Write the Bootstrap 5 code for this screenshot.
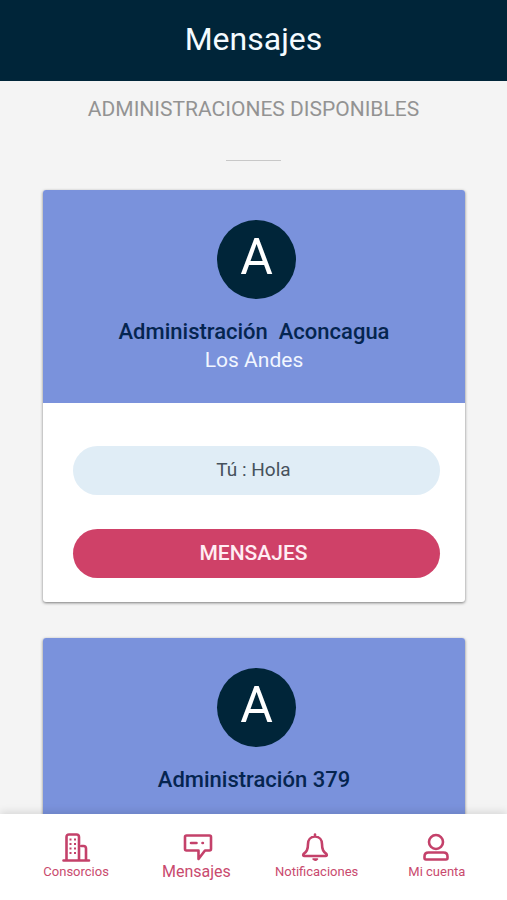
<!DOCTYPE html>
<html lang="es">
<head>
<meta charset="utf-8">
<meta name="viewport" content="width=device-width, initial-scale=1">
<title>Mensajes</title>
<link href="https://cdn.jsdelivr.net/npm/bootstrap@5.3.0/dist/css/bootstrap.min.css" rel="stylesheet">
<style>
  body { font-family: Roboto, "Liberation Sans", sans-serif; background: #f4f4f4; }
  .top-bar { background: #002539; color: #f4fbff; height: 81px; padding-bottom: 4px; }
  .top-bar h1 { font-size: 32px; line-height: 40px; }
  .scroll-area { min-height: 0; scrollbar-width: none; }
  .scroll-area::-webkit-scrollbar { display: none; }
  .section-title { font-size: 21px; line-height: 24px; color: #939393; padding-top: 16px; }
  .divider { width: 55px; border-top: 1px solid #c8c8c8; margin-top: 39px; margin-bottom: 29px; }
  .admin-list { padding: 0 42px 36px 43px; gap: 36px; }
  .admin-card { border-radius: 3px; background: #fff; box-shadow: 0 1px 3px rgba(0,0,0,.5); overflow: hidden; }
  .admin-head { background: #7a92dc; min-height: 213px; padding-top: 30px; }
  .inset { padding-left: 30px; padding-right: 25px; }
  .avatar { width: 79px; height: 79px; background: #002539; color: #fff; font-size: 50px; line-height: 75px; }
  .admin-name { font-size: 22px; line-height: 28px; font-weight: 500; color: #052550; margin-top: 19px; white-space: pre-wrap; }
  .admin-place { font-size: 21px; line-height: 28px; color: #f1f6ff; }
  .admin-body { padding-top: 43px; padding-bottom: 24px; gap: 34px; }
  .pill { height: 49px; line-height: 48px; padding: 0 6px 0 0; border: 0; }
  .preview { background: #e0edf6; color: #46525c; font-size: 19px; }
  .btn.open-chat { background: #cf4168; color: #ffedf3; font-size: 21px; line-height: 46px; padding-bottom: 2px; font-weight: 500; }
  .tab-bar { background: #fff; height: 86px; padding: 18px 10px 0 16px; box-shadow: 0 -2px 8px rgba(0,0,0,.12); }
  .tab-bar a { color: #c94a6e; font-size: 13px; line-height: 20px; }
  .tab-bar a.current { font-size: 16px; }
  .tab-bar svg { width: 30px; height: 30px; overflow: visible; fill: none; stroke: #c4416a; stroke-width: 3; stroke-linejoin: round; stroke-linecap: round; }
</style>
<script src="https://cdn.jsdelivr.net/npm/bootstrap@5.3.0/dist/js/bootstrap.bundle.min.js"></script>
</head>
<body>
<div class="vh-100 d-flex flex-column">
  <header class="top-bar d-flex align-items-center justify-content-center flex-shrink-0">
    <h1 class="m-0 fw-normal">Mensajes</h1>
  </header>
  <main class="scroll-area flex-grow-1 overflow-auto">
    <h2 class="section-title text-center fw-normal m-0">ADMINISTRACIONES DISPONIBLES</h2>
    <div class="divider mx-auto"></div>
    <div class="admin-list d-flex flex-column">
      <article class="admin-card flex-shrink-0">
        <div class="admin-head text-center">
          <div class="inset d-flex justify-content-center"><div class="avatar rounded-circle">A</div></div>
          <h3 class="admin-name mb-0">Administración  Aconcagua</h3>
          <p class="admin-place m-0">Los Andes</p>
        </div>
        <div class="admin-body inset d-flex flex-column">
          <div class="pill preview rounded-pill text-center">Tú : Hola</div>
          <button type="button" class="btn pill open-chat rounded-pill">MENSAJES</button>
        </div>
      </article>
      <article class="admin-card flex-shrink-0">
        <div class="admin-head text-center">
          <div class="inset d-flex justify-content-center"><div class="avatar rounded-circle">A</div></div>
          <h3 class="admin-name mb-0">Administración 379</h3>
        </div>
      </article>
    </div>
  </main>
  <nav class="tab-bar d-flex flex-shrink-0 position-relative">
    <a href="#" class="col d-flex flex-column align-items-center text-decoration-none">
      <svg viewBox="0 0 30 30" aria-hidden="true"><path stroke-width="2.600" d="M2.500 28.500H28M5.500 28V5q0-2.500 2.500-2.500h7.500q2.500 0 2.500 2.500V28M20.500 14h2q2.500 0 2.500 2.500V28"/><path stroke-width="2" stroke-linecap="butt" d="M8.500 7.500h2m2.500 0h2M8.500 12h2m2.500 0h2M8.500 16.500h2m2.500 0h2M8.500 21h2m2.500 0h2"/></svg>
      <span>Consorcios</span>
    </a>
    <a href="#" class="current col d-flex flex-column align-items-center text-decoration-none" aria-current="page">
      <svg viewBox="0 0 30 30" aria-hidden="true"><path stroke-width="2.600" d="M5.500 3.500h23q1.500 0 1.500 1.500v12q0 1.500-1.500 1.500h-4.500l-6.500 8.500v-8.500H5.500Q4 18.500 4 17V5q0-1.500 1.500-1.500z"/><path stroke-width="2.600" d="M10 11h5.500M21.500 11h.4"/></svg>
      <span>Mensajes</span>
    </a>
    <a href="#" class="col d-flex flex-column align-items-center text-decoration-none">
      <svg viewBox="2 0 30 30" aria-hidden="true"><path stroke-width="2.600" d="M15 2.500v2M15 4.500c-4.500 0-7 3.500-7 7.500 0 6-1.500 7.500-4.500 10q-1 2 1 2h21q2 0 1-2c-3-2.500-4.500-4-4.500-10 0-4-2.500-7.500-7-7.500z"/><path d="M13 27h4.500q-2.200 2.500-4.500 0z" stroke-width="1.500" fill="#c4416a"/></svg>
      <span>Notificaciones</span>
    </a>
    <a href="#" class="col d-flex flex-column align-items-center text-decoration-none">
      <svg viewBox="1 0 30 30" aria-hidden="true"><circle cx="15" cy="10" r="7" stroke-width="2.600"/><path stroke-width="2.600" d="M7.500 20.500h15q4 0 4 4v1.500q0 1.500-1.500 1.500H5q-1.500 0-1.500-1.500v-1.500q0-4 4-4z"/></svg>
      <span>Mi cuenta</span>
    </a>
  </nav>
</div>
</body>
</html>
